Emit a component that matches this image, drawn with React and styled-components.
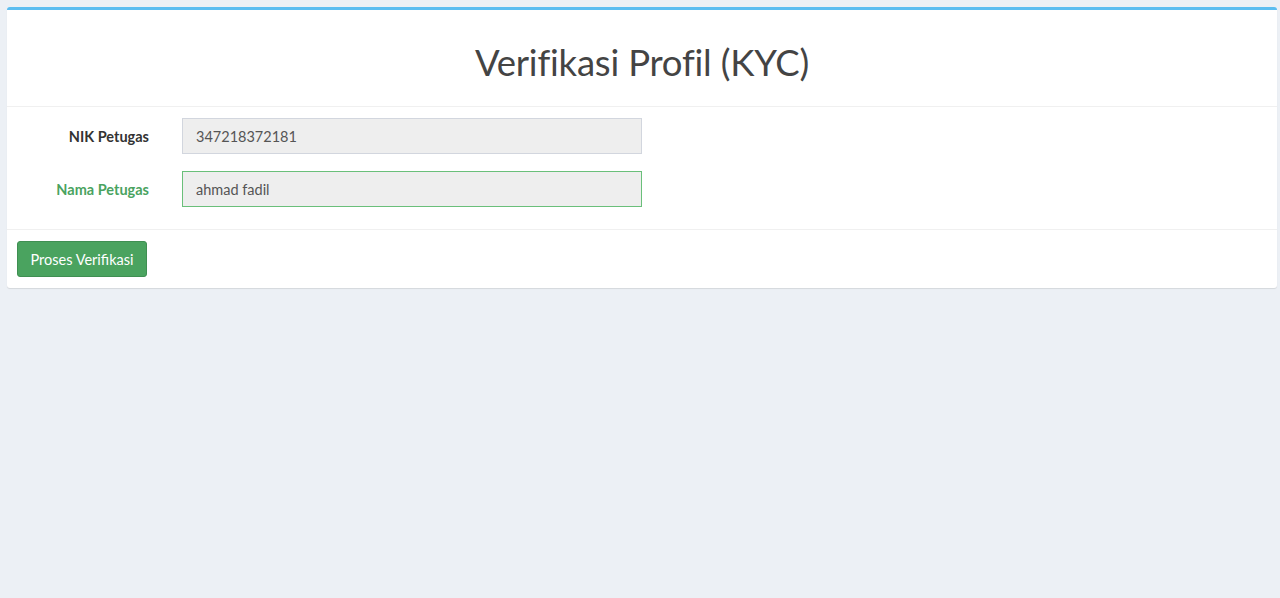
import React from "react";
import styled, { createGlobalStyle } from "styled-components";

const GlobalStyle = createGlobalStyle`
  html, body {
    margin: 0;
    padding: 0;
    background: #ecf0f5;
    font-family: "Lato", "Open Sans", "Liberation Sans", sans-serif;
    color: #333;
  }
  * { box-sizing: border-box; }
`;

const fields = [
  { label: "NIK Petugas", value: "347218372181", success: false },
  { label: "Nama Petugas", value: "ahmad fadil", success: true },
];

const App = () => {
  return (
    <>
      <GlobalStyle />
      <Page>
        <Box>
          <BoxHeader>
            <Title>Verifikasi Profil (KYC)</Title>
          </BoxHeader>
          <BoxBody>
            {fields.map((f) => (
              <FormRow key={f.label}>
                <Label $success={f.success}>{f.label}</Label>
                <Input readOnly value={f.value} $success={f.success} />
              </FormRow>
            ))}
          </BoxBody>
          <BoxFooter>
            <Button type="button">Proses Verifikasi</Button>
          </BoxFooter>
        </Box>
      </Page>
    </>
  );
};

export default App;

const Page = styled.div`
  padding: 7px 3px 0 7px;
  min-height: 598px;
`;

const Box = styled.div`
  background: #fff;
  border-top: 3px solid #5bbdf0;
  border-radius: 3px;
  box-shadow: 0 1px 1px rgba(0, 0, 0, 0.1);
`;

const BoxHeader = styled.div`
  height: 97px;
  display: flex;
  align-items: center;
  justify-content: center;
  border-bottom: 1px solid #f0f0f0;
`;

const Title = styled.h3`
  margin: 0;
  padding-top: 8px;
  font-size: 36.5px;
  font-weight: 400;
  color: #444;
  letter-spacing: -0.2px;
`;

const BoxBody = styled.div`
  padding: 11px 0 22px 0;
  display: flex;
  flex-direction: column;
  gap: 17px;
  border-bottom: 1px solid #f0f0f0;
`;

const FormRow = styled.div`
  display: grid;
  grid-template-columns: 142px 460px;
  column-gap: 33px;
  align-items: center;
`;

const Label = styled.label`
  text-align: right;
  font-size: 14.5px;
  font-weight: 700;
  color: ${(p) => (p.$success ? "#4aa35f" : "#333")};
`;

const Input = styled.input`
  height: 36px;
  width: 460px;
  padding: 0 13px;
  font-family: inherit;
  font-size: 14.5px;
  color: #555;
  background: #eeeeee;
  border: 1px solid ${(p) => (p.$success ? "#6abf7a" : "#d2d6de")};
  outline: none;
`;

const BoxFooter = styled.div`
  padding: 11px 10px 11px 10px;
`;

const Button = styled.button`
  display: block;
  height: 36px;
  width: 130px;
  font-family: inherit;
  font-size: 14.5px;
  color: #fff;
  background: #4aa35f;
  border: 1px solid #3f8f52;
  border-radius: 3px;
  cursor: pointer;
`;
